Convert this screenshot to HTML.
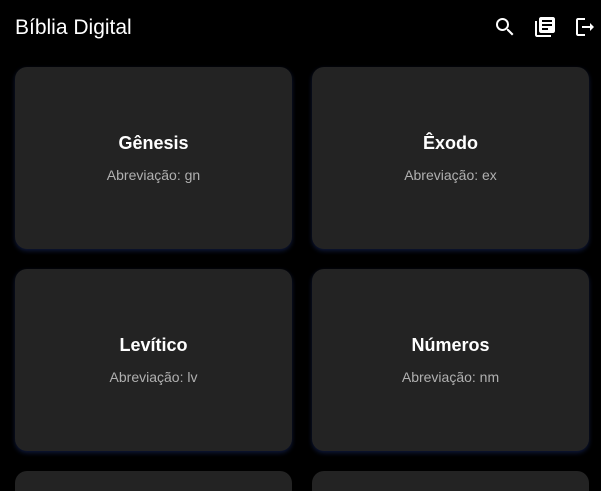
<!DOCTYPE html>
<html style="width:601px;height:491px;overflow:hidden"><head><meta charset="utf-8"><style>
*{margin:0;padding:0;box-sizing:border-box}
html,body{width:601px;height:491px;overflow:hidden}
body{background:#000;font-family:"Liberation Sans",sans-serif;color:#fff;position:relative}
.title{position:absolute;left:15px;top:16px;font-size:21px}
.ic{position:absolute;top:15px;width:24px;height:24px}
.card{position:absolute;width:277px;height:182px;background:#232323;border-radius:12px;box-shadow:0 2px 5px rgba(40,70,160,.35);text-align:center}
.card h2{position:absolute;top:66px;width:100%;font-size:18px;font-weight:bold}
.card p{position:absolute;top:100px;width:100%;font-size:14px;color:#b0b0b0}
.cut{height:20px;border-radius:12px 12px 0 0;box-shadow:none}
</style></head><body>
<div class="title">Bíblia Digital</div>
<svg class="ic" style="left:493px" viewBox="0 0 24 24"><path fill="#fff" d="M15.5 14h-.79l-.28-.27A6.47 6.47 0 0 0 16 9.5 6.5 6.5 0 1 0 9.5 16c1.61 0 3.09-.59 4.23-1.57l.27.28v.79l5 4.99L20.49 19l-4.99-5zm-6 0C7.01 14 5 11.99 5 9.5S7.01 5 9.5 5 14 7.01 14 9.5 11.99 14 9.5 14z"/></svg>
<svg class="ic" style="left:533px" viewBox="0 0 24 24"><path fill="#fff" d="M4 6H2v14c0 1.1.9 2 2 2h14v-2H4V6zm16-4H8c-1.1 0-2 .9-2 2v12c0 1.1.9 2 2 2h12c1.1 0 2-.9 2-2V4c0-1.1-.9-2-2-2zm-1 9H9V9h10v2zm-4 4H9v-2h6v2zm4-8H9V5h10v2z"/></svg>
<svg class="ic" style="left:573px" viewBox="0 0 24 24"><path fill="#fff" d="M5 5h7V3H5c-1.1 0-2 .9-2 2v14c0 1.1.9 2 2 2h7v-2H5V5zm16 7-4-4v3H9v2h8v3l4-4z"/></svg>
<div class="card" style="left:15px;top:67px"><h2>Gênesis</h2><p>Abreviação: gn</p></div>
<div class="card" style="left:312px;top:67px"><h2>Êxodo</h2><p>Abreviação: ex</p></div>
<div class="card" style="left:15px;top:269px"><h2>Levítico</h2><p>Abreviação: lv</p></div>
<div class="card" style="left:312px;top:269px"><h2>Números</h2><p>Abreviação: nm</p></div>
<div class="card cut" style="left:15px;top:471px"></div>
<div class="card cut" style="left:312px;top:471px"></div>
</body></html>
